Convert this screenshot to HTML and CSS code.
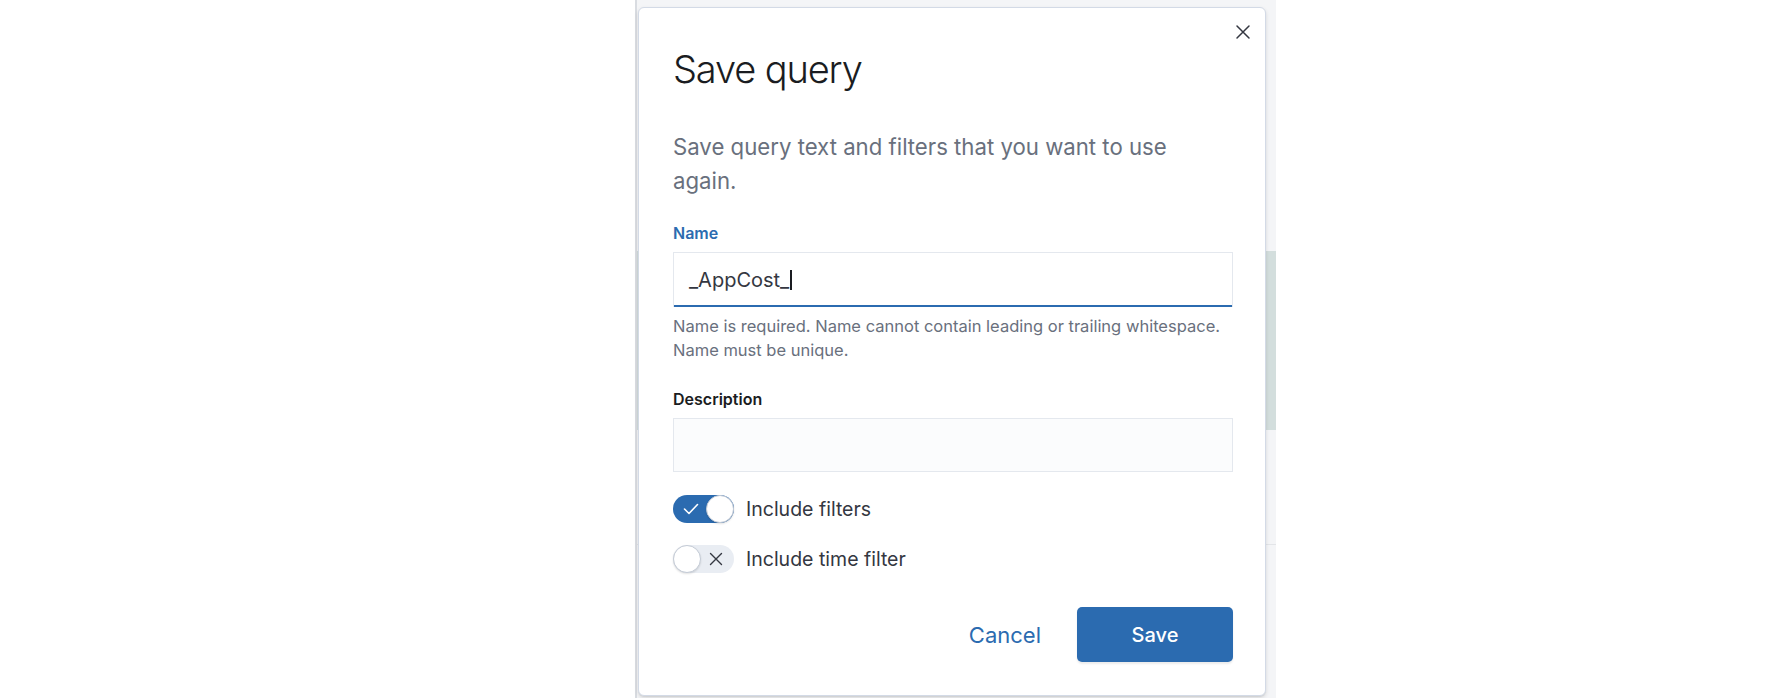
FILE: index.html
```html
<!DOCTYPE html>
<html lang="en">
<head>
<meta charset="utf-8">
<title>Save query</title>
<link rel="stylesheet" href="styles.css">
</head>
<body>
<div class="page">
  <div class="backdrop">
    <div class="modal">
      <button class="close" type="button" aria-label="Close">
        <svg width="16" height="16" viewBox="0 0 16 16"><path d="M2 2 L14 14 M14 2 L2 14" stroke="#343741" stroke-width="1.5" fill="none" stroke-linecap="round"/></svg>
      </button>
      <h1 class="title">Save query</h1>
      <p class="intro">Save query text and filters that you want to use again.</p>

      <div class="label label-active">Name</div>
      <div class="input input-focus"><span class="value">_AppCost_</span><span class="caret"></span></div>
      <div class="help">
        <div>Name is required. Name cannot contain leading or trailing whitespace.</div>
        <div>Name must be unique.</div>
      </div>

      <div class="label label-desc">Description</div>
      <div class="input input-desc"></div>

      <div class="switch-row switch-row-first">
        <span class="switch switch-on">
          <svg class="sw-icon sw-check" width="16" height="12" viewBox="0 0 16 12"><polyline points="1.5,6 6,10.5 14.5,1.5" stroke="#fff" stroke-width="1.6" fill="none" stroke-linecap="round" stroke-linejoin="round"/></svg>
          <span class="thumb"></span>
        </span>
        <span class="switch-label">Include filters</span>
      </div>
      <div class="switch-row switch-row-second">
        <span class="switch switch-off">
          <span class="thumb"></span>
          <svg class="sw-icon sw-cross" width="14" height="14" viewBox="0 0 14 14"><path d="M1.5 1.5 L12.5 12.5 M12.5 1.5 L1.5 12.5" stroke="#343741" stroke-width="1.4" fill="none" stroke-linecap="round"/></svg>
        </span>
        <span class="switch-label">Include time filter</span>
      </div>

      <div class="footer">
        <button class="btn-empty" type="button">Cancel</button>
        <button class="btn-fill" type="button">Save</button>
      </div>
    </div>
  </div>
</div>
</body>
</html>
```

FILE: styles.css
```css
* { box-sizing: border-box; }

html, body {
  margin: 0;
  padding: 0;
  background: #ffffff;
}

body {
  width: 1788px;
  height: 698px;
  overflow: hidden;
  font-family: Inter, "Noto Sans", "Liberation Sans", sans-serif;
  color: #1a1c21;
}

.page {
  padding-left: 635px;
}

.backdrop {
  width: 641px;
  height: 698px;
  padding: 7px 0 0 3px;
  background:
    linear-gradient(to right, #d9dce1 0, #d9dce1 1.5px, transparent 1.5px),
    linear-gradient(to bottom, transparent 0, transparent 251px, #d3dedd 251px, #d3dedd 430px, transparent 430px),
    linear-gradient(to bottom, transparent 0, transparent 544px, #e3e5e8 544px, #e3e5e8 545px, transparent 545px),
    #f4f5f7;
}

.modal {
  position: relative;
  width: 628px;
  height: 689px;
  background: #ffffff;
  border: 1px solid #d3dae6;
  border-radius: 6px;
  box-shadow: 0 2px 4px rgba(0, 0, 0, 0.12), 0 1px 1px rgba(0, 0, 0, 0.06);
  padding: 37px 32px 0 34px;
  display: flex;
  flex-direction: column;
}

.close {
  position: absolute;
  top: 16px;
  right: 14px;
  width: 16px;
  height: 16px;
  padding: 0;
  border: 0;
  background: transparent;
  display: flex;
}

.title {
  margin: 0;
  font-size: 38px;
  font-weight: 300;
  line-height: 48px;
  letter-spacing: -0.03em;
  color: #1a1c21;
}

.intro {
  margin: 37px 0 0;
  max-width: 530px;
  font-size: 22.2px;
  line-height: 34px;
  color: #69707d;
}

.label {
  margin-top: 25px;
  font-size: 16px;
  font-weight: 600;
  line-height: 20px;
  color: #1a1c21;
}

.label-active {
  color: #2b6bb0;
}

.label-desc {
  margin-top: 27px;
}

.input {
  margin-top: 9px;
  width: 100%;
  height: 55px;
  border: 1px solid #e4e8ee;
  background: #fbfcfd;
  display: flex;
  align-items: center;
  padding-left: 15px;
}

.input-focus {
  background: #ffffff;
  border-bottom: 0;
  box-shadow: inset 0 -2px 0 #2b6bb0;
  font-size: 20px;
  color: #343741;
}

.input-desc {
  height: 54px;
}

.caret {
  width: 1.5px;
  height: 20px;
  background: #1a1c21;
  margin-left: 1px;
}

.help {
  margin-top: 7px;
  font-size: 16.5px;
  line-height: 24px;
  color: #69707d;
}

.switch-row {
  display: flex;
  align-items: center;
  gap: 12px;
}

.switch-row-first {
  margin-top: 23px;
}

.switch-row-second {
  margin-top: 22px;
}

.switch {
  width: 61px;
  height: 28px;
  border-radius: 14px;
  display: flex;
  align-items: center;
  flex: none;
}

.switch-on {
  background: #2b6bb0;
  justify-content: space-between;
  padding-left: 10px;
}

.switch-off {
  background: #e9edf3;
}

.thumb {
  width: 28px;
  height: 28px;
  border-radius: 50%;
  background: #ffffff;
  border: 1px solid #c4cbd6;
  box-shadow: 0 1px 2px rgba(0, 0, 0, 0.12);
  flex: none;
}

.sw-cross {
  margin-left: 8px;
}

.switch-label {
  font-size: 19.5px;
  line-height: 28px;
  color: #343741;
}

.footer {
  margin-top: 34px;
  display: flex;
  justify-content: flex-end;
  align-items: center;
}

.btn-empty {
  border: 0;
  background: transparent;
  font-family: inherit;
  font-size: 22px;
  font-weight: 400;
  color: #2b6bb0;
  padding: 0;
  margin-right: 36px;
}

.btn-fill {
  width: 156px;
  height: 55px;
  border: 0;
  border-radius: 5px;
  background: #2b6bb0;
  color: #ffffff;
  font-family: inherit;
  font-size: 20px;
  font-weight: 500;
  box-shadow: 0 2px 2px rgba(0, 0, 0, 0.08);
}
```
